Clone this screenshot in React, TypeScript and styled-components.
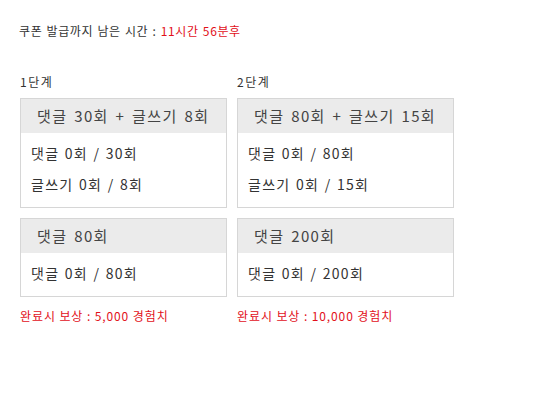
import styled, { createGlobalStyle } from 'styled-components';

const GlobalStyle = createGlobalStyle`
  body {
    margin: 0;
    background: #fff;
    font-family: 'Noto Sans CJK KR', 'Noto Sans', sans-serif;
    color: #333;
  }
`;

type Card = { title: string; lines: string[] };
type Stage = { label: string; width: number; cards: Card[]; reward: string };

const stages: Stage[] = [
  {
    label: '1단계',
    width: 207,
    cards: [
      { title: '댓글 30회 + 글쓰기 8회', lines: ['댓글 0회 / 30회', '글쓰기 0회 / 8회'] },
      { title: '댓글 80회', lines: ['댓글 0회 / 80회'] },
    ],
    reward: '완료시 보상 : 5,000 경험치',
  },
  {
    label: '2단계',
    width: 217,
    cards: [
      { title: '댓글 80회 + 글쓰기 15회', lines: ['댓글 0회 / 80회', '글쓰기 0회 / 15회'] },
      { title: '댓글 200회', lines: ['댓글 0회 / 200회'] },
    ],
    reward: '완료시 보상 : 10,000 경험치',
  },
];

export default function App() {
  return (
    <Page>
      <GlobalStyle />
      <Notice>
        쿠폰 발급까지 남은 시간 : <Red>11시간 56분후</Red>
      </Notice>
      <Stages>
        {stages.map((stage) => (
          <Column key={stage.label} $width={stage.width}>
            <Label>{stage.label}</Label>
            {stage.cards.map((card) => (
              <Box key={card.title}>
                <BoxHead>{card.title}</BoxHead>
                <BoxBody>
                  {card.lines.map((line) => (
                    <Line key={line}>{line}</Line>
                  ))}
                </BoxBody>
              </Box>
            ))}
            <Reward>{stage.reward}</Reward>
          </Column>
        ))}
      </Stages>
    </Page>
  );
}

const Page = styled.div`
  padding: 22px 20px;
`;

const Notice = styled.div`
  font-size: 12px;
  line-height: 18px;
  color: #333;
  letter-spacing: 0.6px;
  word-spacing: 1px;
  margin-left: -1px;
`;

const Red = styled.span`
  color: #e2101a;
`;

const Stages = styled.div`
  display: flex;
  gap: 10px;
  margin-top: 33px;
`;

const Column = styled.div<{ $width: number }>`
  display: flex;
  flex-direction: column;
  width: ${(p) => p.$width}px;
`;

const Label = styled.div`
  font-size: 12px;
  line-height: 18px;
  color: #333;
  letter-spacing: 1.5px;
  margin-bottom: 7px;
`;

const Box = styled.div`
  border: 1px solid #d6d6d6;
  margin-bottom: 10px;
`;

const BoxHead = styled.div`
  height: 34px;
  line-height: 34px;
  background: #ebebeb;
  padding: 0 16px;
  font-size: 15px;
  letter-spacing: 1.4px;
  word-spacing: 2px;
  color: #444;
  white-space: nowrap;
`;

const BoxBody = styled.div`
  padding: 5px 10px 7px;
`;

const Line = styled.div`
  font-size: 14px;
  line-height: 31px;
  letter-spacing: 1.3px;
  word-spacing: 1px;
  color: #333;
  white-space: nowrap;
`;

const Reward = styled.div`
  font-size: 12px;
  line-height: 18px;
  color: #e2101a;
  letter-spacing: 0.9px;
`;
